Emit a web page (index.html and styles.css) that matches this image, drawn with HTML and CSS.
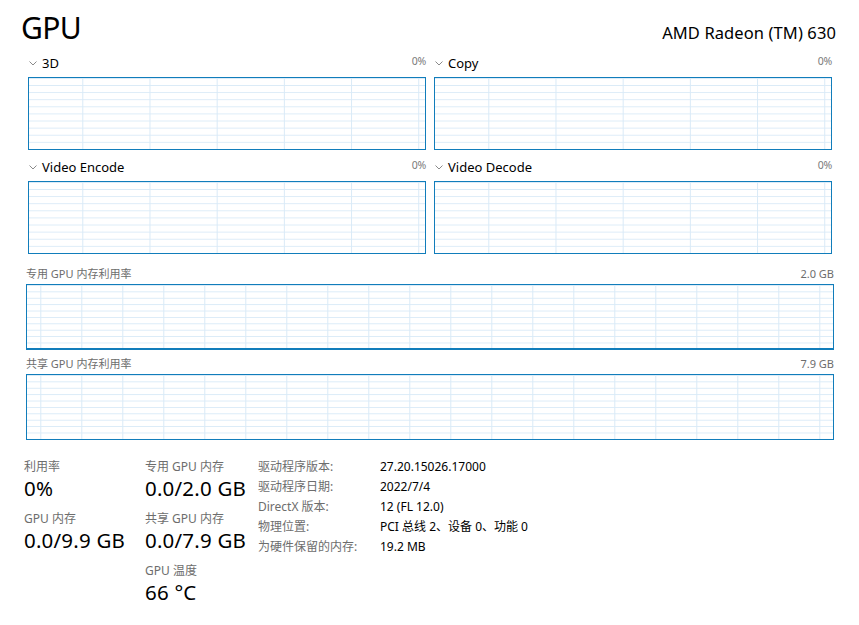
FILE: index.html
```html
<!DOCTYPE html>
<html lang="zh-CN">
<head>
<meta charset="utf-8">
<title>GPU</title>
<link rel="stylesheet" href="styles.css">
</head>
<body>
<div class="page">
  <header class="header">
    <h1 class="title">GPU</h1>
    <div class="device">AMD Radeon (TM) 630</div>
  </header>

  <section class="engines">
    <div class="engine">
      <div class="engine-head">
        <span class="chev"><svg width="8" height="5" viewBox="0 0 8 5"><polyline points="0.5,0.5 4,4 7.5,0.5" fill="none" stroke="#8a8a8a" stroke-width="1"/></svg></span>
        <span class="engine-name">3D</span>
        <span class="engine-pct">0%</span>
      </div>
      <div class="chart chart-engine"></div>
    </div>
    <div class="engine">
      <div class="engine-head">
        <span class="chev"><svg width="8" height="5" viewBox="0 0 8 5"><polyline points="0.5,0.5 4,4 7.5,0.5" fill="none" stroke="#8a8a8a" stroke-width="1"/></svg></span>
        <span class="engine-name">Copy</span>
        <span class="engine-pct">0%</span>
      </div>
      <div class="chart chart-engine"></div>
    </div>
    <div class="engine">
      <div class="engine-head">
        <span class="chev"><svg width="8" height="5" viewBox="0 0 8 5"><polyline points="0.5,0.5 4,4 7.5,0.5" fill="none" stroke="#8a8a8a" stroke-width="1"/></svg></span>
        <span class="engine-name">Video Encode</span>
        <span class="engine-pct">0%</span>
      </div>
      <div class="chart chart-engine"></div>
    </div>
    <div class="engine">
      <div class="engine-head">
        <span class="chev"><svg width="8" height="5" viewBox="0 0 8 5"><polyline points="0.5,0.5 4,4 7.5,0.5" fill="none" stroke="#8a8a8a" stroke-width="1"/></svg></span>
        <span class="engine-name">Video Decode</span>
        <span class="engine-pct">0%</span>
      </div>
      <div class="chart chart-engine"></div>
    </div>
  </section>

  <section class="memory">
    <div class="mem-head">
      <span>专用 GPU 内存利用率</span>
      <span>2.0 GB</span>
    </div>
    <div class="chart chart-mem chart-mem-used"></div>
    <div class="mem-head">
      <span>共享 GPU 内存利用率</span>
      <span>7.9 GB</span>
    </div>
    <div class="chart chart-mem"></div>
  </section>

  <section class="stats">
    <div class="stat-col col1">
      <div class="stat">
        <div class="stat-label">利用率</div>
        <div class="stat-value">0%</div>
      </div>
      <div class="stat">
        <div class="stat-label">GPU 内存</div>
        <div class="stat-value">0.0/9.9 GB</div>
      </div>
    </div>
    <div class="stat-col col2">
      <div class="stat">
        <div class="stat-label">专用 GPU 内存</div>
        <div class="stat-value">0.0/2.0 GB</div>
      </div>
      <div class="stat">
        <div class="stat-label">共享 GPU 内存</div>
        <div class="stat-value">0.0/7.9 GB</div>
      </div>
      <div class="stat">
        <div class="stat-label">GPU 温度</div>
        <div class="stat-value">66 °C</div>
      </div>
    </div>
    <dl class="props">
      <dt>驱动程序版本:</dt><dd>27.20.15026.17000</dd>
      <dt>驱动程序日期:</dt><dd>2022/7/4</dd>
      <dt>DirectX 版本:</dt><dd>12 (FL 12.0)</dd>
      <dt>物理位置:</dt><dd>PCI 总线 2、设备 0、功能 0</dd>
      <dt>为硬件保留的内存:</dt><dd>19.2 MB</dd>
    </dl>
  </section>
</div>
</body>
</html>
```

FILE: styles.css
```css
html, body {
  margin: 0;
  padding: 0;
  background: #ffffff;
}

body {
  font-family: "Noto Sans", "Noto Sans CJK SC", sans-serif;
  color: #000;
  width: 859px;
  height: 625px;
  overflow: hidden;
}

.page {
  display: flex;
  flex-direction: column;
}

/* Header */
.header {
  display: flex;
  justify-content: space-between;
  align-items: flex-end;
  height: 48px;
  padding: 0 23px 0 21px;
}

.title {
  margin: 0;
  font-size: 30px;
  font-weight: 400;
  line-height: 40px;
  letter-spacing: -0.6px;
}

.device {
  font-size: 16.5px;
  line-height: 20px;
  padding-bottom: 5px;
  letter-spacing: 0.1px;
}

/* Engine charts */
.engines {
  display: grid;
  grid-template-columns: 398px 398px;
  column-gap: 8px;
  row-gap: 4px;
  padding: 2px 27px 0 28px;
}

.engine-head {
  display: flex;
  align-items: center;
  height: 27px;
  padding-bottom: 2px;
  box-sizing: border-box;
}

.chev {
  display: flex;
  width: 13px;
  padding-left: 1px;
  padding-top: 1px;
}

.engine-name {
  flex: 1;
  font-size: 13px;
}

.engine-pct {
  font-size: 10.5px;
  color: #7a7a7a;
  padding-bottom: 3px;
  letter-spacing: -0.2px;
}

.chart {
  box-sizing: border-box;
  border: 1px solid #117dbb;
  background-color: #fff;
  background-repeat: repeat;
}

.chart-engine {
  height: 73px;
  background-image:
    linear-gradient(to right, #d9eaf7 1px, transparent 1px),
    linear-gradient(to bottom, #d9eaf7 1px, transparent 1px);
  background-size: 67.2px 100%, 100% 10%;
  background-position: 53.3px 0, 0 0;
}

/* Memory charts */
.memory {
  display: flex;
  flex-direction: column;
  padding: 6px 25px 0 26px;
}

.mem-head {
  display: flex;
  justify-content: space-between;
  align-items: flex-end;
  height: 24px;
  padding-bottom: 3px;
  box-sizing: border-box;
  font-size: 11px;
  line-height: 15px;
  color: #6d6d6d;
}

.chart-mem {
  height: 66px;
  background-image:
    linear-gradient(to right, #d9eaf7 1px, transparent 1px),
    linear-gradient(to bottom, #d9eaf7 1px, transparent 1px);
  background-size: 41px 100%, 100% 10%;
  background-position: 13.3px 0, 0 0;
}

.chart-mem-used {
  box-shadow: inset 0 -1px 0 #117dbb;
}

/* Stats */
.stats {
  display: flex;
  padding: 19px 0 0 24px;
}

.stat-col {
  display: flex;
  flex-direction: column;
}

.col1 {
  width: 121px;
}

.col2 {
  width: 113px;
}

.stat {
  height: 52px;
}

.stat-label {
  font-size: 12px;
  line-height: 16px;
  color: #6d6d6d;
  white-space: nowrap;
}

.stat-value {
  font-size: 20.5px;
  line-height: 27px;
  white-space: nowrap;
  letter-spacing: 0.2px;
}

.props {
  display: grid;
  grid-template-columns: 122px auto;
  grid-auto-rows: 20px;
  align-items: center;
  margin: -3px 0 0 0;
  font-size: 12px;
}

.props dt {
  color: #6d6d6d;
  white-space: nowrap;
}

.props dd {
  margin: 0;
  color: #000;
  white-space: nowrap;
}
```
